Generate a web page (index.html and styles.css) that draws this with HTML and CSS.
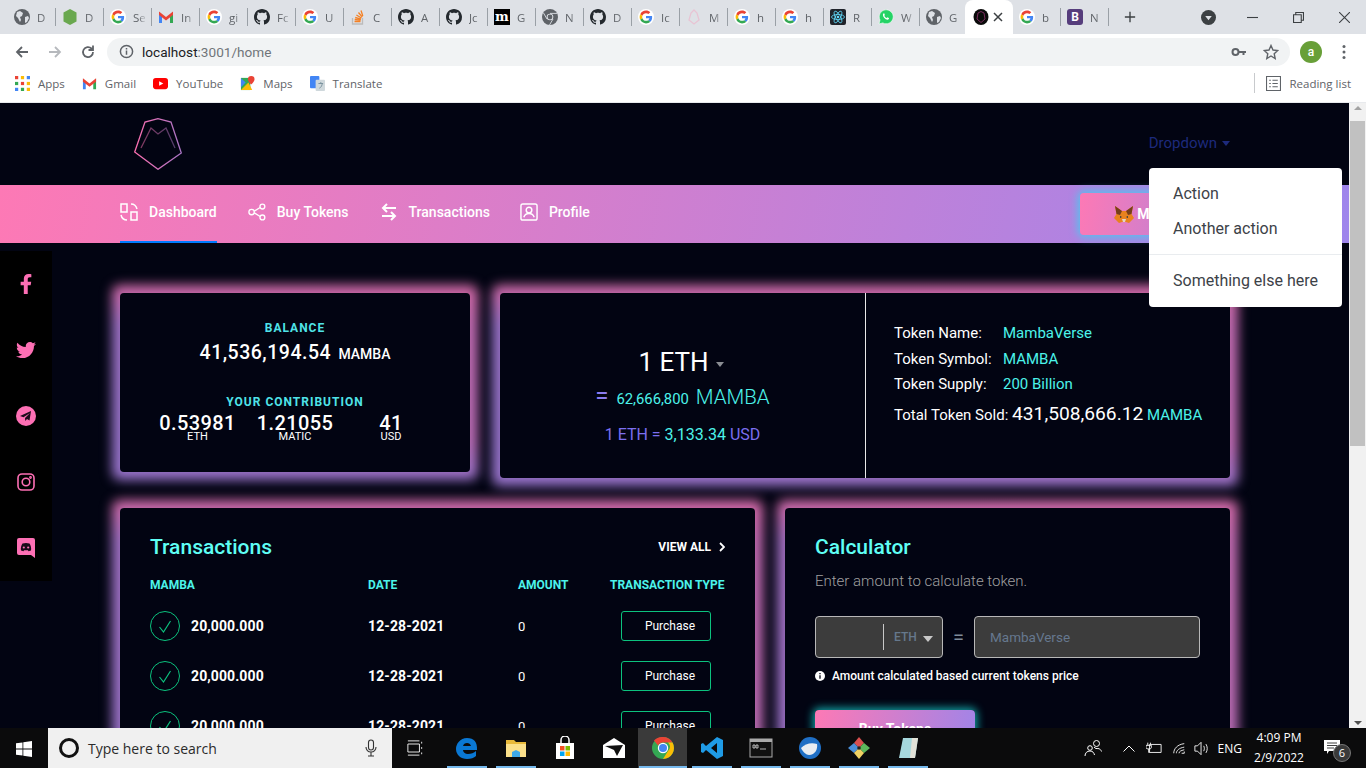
FILE: index.html
```html
<!DOCTYPE html>
<html lang="en">
<head>
  <meta charset="UTF-8">
  <meta name="viewport" content="width=device-width, initial-scale=1.0">
  <title>MambaVerse Dashboard</title>
  <link rel="stylesheet" href="styles.css">
</head>
<body>

  <svg class="defs" width="0" height="0">
    <symbol id="globe" viewBox="0 0 16 16">
      <circle cx="8" cy="8" r="8" fill="#5f6368"/>
      <path d="M3 3l3-1 3 2-1 3-2 1 1 3-1 2-2-4-2-2zM11 8l3-1 1 2-2 4-2 1z" fill="#dee1e6"/>
    </symbol>
    <symbol id="node" viewBox="0 0 16 16">
      <path d="M8 0l6.500 3.500v9L8 16l-6.500-3.500v-9z" fill="#6aa84f"/>
    </symbol>
    <symbol id="google" viewBox="-6 -6 60 60">
      <circle cx="24" cy="24" r="30" fill="#fff"/>
      <path fill="#EA4335" d="M24 9.5c3.54 0 6.71 1.22 9.21 3.6l6.85-6.85C35.9 2.38 30.47 0 24 0 14.62 0 6.51 5.38 2.56 13.22l7.98 6.19C12.43 13.72 17.74 9.5 24 9.5z"/>
      <path fill="#4285F4" d="M46.98 24.55c0-1.57-.15-3.09-.38-4.55H24v9.02h12.94c-.58 2.96-2.26 5.48-4.78 7.18l7.73 6c4.51-4.18 7.09-10.36 7.09-17.65z"/>
      <path fill="#FBBC05" d="M10.53 28.59c-.48-1.45-.76-2.99-.76-4.59s.27-3.14.76-4.59l-7.98-6.19C.92 16.46 0 20.12 0 24c0 3.88.92 7.54 2.56 10.78l7.97-6.19z"/>
      <path fill="#34A853" d="M24 48c6.48 0 11.93-2.13 15.89-5.81l-7.73-6c-2.15 1.45-4.92 2.3-8.16 2.3-6.26 0-11.57-4.22-13.47-9.91l-7.98 6.19C6.51 42.62 14.62 48 24 48z"/>
    </symbol>
    <symbol id="gmail" viewBox="0 0 16 16">
      <path d="M1 3v11h3V7z" fill="#4285f4"/>
      <path d="M15 3v11h-3V7z" fill="#34a853"/>
      <path d="M1 2.500l7 5.500 7-5.500V6L8 11.500 1 6z" fill="#ea4335"/>
    </symbol>
    <symbol id="github" viewBox="0 0 16 16">
      <path fill="#24292e" d="M8 0C3.58 0 0 3.58 0 8c0 3.54 2.29 6.53 5.47 7.59.4.07.55-.17.55-.38 0-.19-.01-.82-.01-1.49-2.01.37-2.53-.49-2.69-.94-.09-.23-.48-.94-.82-1.13-.28-.15-.68-.52-.01-.53.63-.01 1.08.58 1.23.82.72 1.21 1.87.87 2.33.66.07-.52.28-.87.51-1.07-1.78-.2-3.64-.89-3.64-3.95 0-.87.31-1.59.82-2.15-.08-.2-.36-1.02.08-2.12 0 0 .67-.21 2.2.82.64-.18 1.32-.27 2-.27.68 0 1.36.09 2 .27 1.53-1.04 2.2-.82 2.2-.82.44 1.1.16 1.92.08 2.12.51.56.82 1.27.82 2.15 0 3.07-1.87 3.75-3.65 3.95.29.25.54.73.54 1.48 0 1.07-.01 1.93-.01 2.2 0 .21.15.46.55.38A8.013 8.013 0 0016 8c0-4.42-3.58-8-8-8z"/>
    </symbol>
    <symbol id="stack" viewBox="0 0 16 16">
      <path d="M2.500 9v6h10V9" fill="none" stroke="#bcbbbb" stroke-width="1.300"/>
      <path d="M4.500 12.500h6M4.700 10.500l6 .6M5.200 8.500l5.800 1.600M6.400 6l5 3M8.500 3.500l3.800 4.600M11 1.500l1.800 5.500" fill="none" stroke="#f48024" stroke-width="1.300"/>
    </symbol>
    <symbol id="chromium" viewBox="0 0 16 16">
      <circle cx="8" cy="8" r="8" fill="#5f6368"/>
      <path d="M8 4.400h7M5 10L1.500 4M11 10l-3.500 6" stroke="#dee1e6" stroke-width=".9"/>
      <circle cx="8" cy="8" r="3.300" fill="#dee1e6"/>
      <circle cx="8" cy="8" r="2.400" fill="#5f6368"/>
    </symbol>
    <symbol id="mamba-pale" viewBox="0 0 16 16">
      <path d="M8 1l3 3 2 7-5 4-5-4 2-7z" fill="none" stroke="#e8c4d4" stroke-width="1.300"/>
    </symbol>
    <symbol id="react" viewBox="0 0 16 16">
      <rect width="16" height="16" rx="2" fill="#20232a"/>
      <g fill="none" stroke="#61dafb" stroke-width=".8">
        <ellipse cx="8" cy="8" rx="6.500" ry="2.500"/>
        <ellipse cx="8" cy="8" rx="6.500" ry="2.500" transform="rotate(60 8 8)"/>
        <ellipse cx="8" cy="8" rx="6.500" ry="2.500" transform="rotate(120 8 8)"/>
      </g>
      <circle cx="8" cy="8" r="1.300" fill="#61dafb"/>
    </symbol>
    <symbol id="whatsapp" viewBox="0 0 16 16">
      <path d="M1 15l1-4a7 7 0 112.800 2.900z" fill="#25d366" stroke="#fff" stroke-width=".6"/>
      <path d="M5.500 4.500c-1 1-.7 2.600.6 4.200s3 2.400 4.200 1.800c.8-.5.9-1.300.5-1.500l-1.400-.7-.7.8c-.9-.3-2-1.300-2.400-2.300l.6-.8-.6-1.500c-.2-.2-.5-.2-.8 0z" fill="#fff"/>
    </symbol>
    <symbol id="mamba-dark" viewBox="0 0 16 16">
      <ellipse cx="8" cy="8" rx="7.500" ry="8" fill="#0a0a0a"/>
      <path d="M8 2.500l3 1.500 1 6-4 3.500-4-3.500 1-6z" fill="none" stroke="#7a2c5e" stroke-width="1"/>
    </symbol>
    <symbol id="check" viewBox="0 0 30 30">
      <circle cx="15" cy="15" r="14.500" fill="none" stroke="#0cc27e" stroke-width="1"/>
      <path d="M9.500 16l4 5 7-11" fill="none" stroke="#0cc27e" stroke-width="1.200"/>
    </symbol>
  </svg>

  <div class="browser">
    <div class="tabstrip">
      <div class="tab"><svg class="fav"><use href="#globe"/></svg><span>D</span></div>
      <div class="tab"><svg class="fav"><use href="#node"/></svg><span>D</span></div>
      <div class="tab"><svg class="fav"><use href="#google"/></svg><span>Se</span></div>
      <div class="tab"><svg class="fav"><use href="#gmail"/></svg><span>In</span></div>
      <div class="tab"><svg class="fav"><use href="#google"/></svg><span>gi</span></div>
      <div class="tab"><svg class="fav"><use href="#github"/></svg><span>Fc</span></div>
      <div class="tab"><svg class="fav"><use href="#google"/></svg><span>U</span></div>
      <div class="tab"><svg class="fav"><use href="#stack"/></svg><span>C</span></div>
      <div class="tab"><svg class="fav"><use href="#github"/></svg><span>A</span></div>
      <div class="tab"><svg class="fav"><use href="#github"/></svg><span>Jc</span></div>
      <div class="tab"><i class="fav fav-medium">m</i><span>G</span></div>
      <div class="tab"><svg class="fav"><use href="#chromium"/></svg><span>N</span></div>
      <div class="tab"><svg class="fav"><use href="#github"/></svg><span>D</span></div>
      <div class="tab"><svg class="fav"><use href="#google"/></svg><span>Ic</span></div>
      <div class="tab"><svg class="fav"><use href="#mamba-pale"/></svg><span>M</span></div>
      <div class="tab"><svg class="fav"><use href="#google"/></svg><span>h</span></div>
      <div class="tab"><svg class="fav"><use href="#google"/></svg><span>h</span></div>
      <div class="tab"><svg class="fav"><use href="#react"/></svg><span>R</span></div>
      <div class="tab"><svg class="fav"><use href="#whatsapp"/></svg><span>W</span></div>
      <div class="tab tab-noline"><svg class="fav"><use href="#globe"/></svg><span>G</span></div>
      <div class="tab tab-active"><svg class="fav"><use href="#mamba-dark"/></svg>
        <svg class="tab-close" viewBox="0 0 10 10"><path d="M1 1l8 8M9 1l-8 8"/></svg></div>
      <div class="tab"><svg class="fav"><use href="#google"/></svg><span>b</span></div>
      <div class="tab"><i class="fav fav-bootstrap">B</i><span>N</span></div>
      <svg class="newtab" viewBox="0 0 14 14"><path d="M7 1v12M1 7h12"/></svg>
      <svg class="tabsearch" viewBox="0 0 16 16"><circle cx="8" cy="8" r="8" fill="#3c4043"/><path d="M4.500 6.500h7L8 11z" fill="#dee1e6"/></svg>
      <div class="winbtns">
        <svg viewBox="0 0 10 10"><path d="M0 5h10"/></svg>
        <svg viewBox="0 0 10 10"><path d="M.5 2.500h7v7h-7zM2.500 2.500v-2h7v7h-2"/></svg>
        <svg viewBox="0 0 10 10"><path d="M0 0l10 10M10 0L0 10"/></svg>
      </div>
    </div>

    <div class="toolbar">
      <svg class="tool" viewBox="0 0 16 16"><path d="M14 8H3M8 3L3 8l5 5" stroke="#5f6368"/></svg>
      <svg class="tool" viewBox="0 0 16 16"><path d="M2 8h11M8 3l5 5-5 5" stroke="#b6b9bd"/></svg>
      <svg class="tool" viewBox="0 0 16 16"><path d="M13 8a5 5 0 11-1.500-3.500L13 6M13 1.500V6H8.500" stroke="#5f6368"/></svg>
      <div class="omnibox">
        <svg class="omni-info" viewBox="0 0 16 16"><circle cx="8" cy="8" r="6.500"/><path d="M8 7v4.500M8 4.200v1.600"/></svg>
        <span class="url"><b>localhost</b>:3001/home</span>
        <svg class="omni-key" viewBox="0 0 16 16"><circle cx="4.500" cy="8" r="3" fill="none" stroke="#5f6368" stroke-width="2"/><path d="M7 7h8v2h-1.500v2h-2V9H7z" fill="#5f6368"/></svg>
        <svg class="omni-star" viewBox="0 0 16 16"><path d="M8 1.500l2 4.500 4.800.5-3.600 3.200 1 4.800L8 12l-4.200 2.500 1-4.800L1.200 6.500 6 6z"/></svg>
      </div>
      <span class="avatar">a</span>
      <svg class="menu-dots" viewBox="0 0 4 16"><circle cx="2" cy="2.500" r="1.500"/><circle cx="2" cy="8" r="1.500"/><circle cx="2" cy="13.500" r="1.500"/></svg>
    </div>

    <div class="bookmarks">
      <a class="bm">
        <svg class="bm-icon" viewBox="0 0 14 14">
          <rect width="3" height="3" fill="#ea4335"/><rect x="5.500" width="3" height="3" fill="#fbbc05"/><rect x="11" width="3" height="3" fill="#4285f4"/>
          <rect y="5.500" width="3" height="3" fill="#34a853"/><rect x="5.500" y="5.500" width="3" height="3" fill="#ea4335"/><rect x="11" y="5.500" width="3" height="3" fill="#fbbc05"/>
          <rect y="11" width="3" height="3" fill="#4285f4"/><rect x="5.500" y="11" width="3" height="3" fill="#34a853"/><rect x="11" y="11" width="3" height="3" fill="#fbbc05"/>
        </svg>Apps</a>
      <a class="bm"><svg class="bm-icon"><use href="#gmail"/></svg>Gmail</a>
      <a class="bm"><svg class="bm-icon" viewBox="0 0 16 16"><rect y="2" width="16" height="12" rx="3" fill="#f00"/><path d="M6.500 5.500L11 8l-4.500 2.500z" fill="#fff"/></svg>YouTube</a>
      <a class="bm"><svg class="bm-icon" viewBox="0 0 16 16"><path d="M1 2h10v13H1z" fill="#34a853"/><path d="M1 15l8-8 4 8z" fill="#fbbc05"/><path d="M1 2l5 5-5 5z" fill="#4285f4"/><path d="M12 0a3.500 3.500 0 013.500 3.500C15.500 6 12 9 12 9S8.500 6 8.500 3.500A3.500 3.500 0 0112 0z" fill="#ea4335"/></svg>Maps</a>
      <a class="bm"><svg class="bm-icon" viewBox="0 0 16 16"><rect width="10" height="13" rx="1" fill="#4285f4"/><rect x="6" y="4" width="10" height="12" rx="1" fill="#cfd8dc"/><path d="M9 8h5M11.500 6.500v1.500M10 13c2-1 3-3 3-5" fill="none" stroke="#78909c"/></svg>Translate</a>
      <a class="bm bm-reading"><svg class="bm-icon" viewBox="0 0 14 14"><path d="M.5.500h13v13H.5zM3 4h1.500M6 4h5M3 7h1.500M6 7h5M3 10h1.500M6 10h5" fill="none" stroke="#5f6368"/></svg>Reading list</a>
    </div>
  </div>

  <div class="viewport">
    <div class="page">
      <header class="topbar">
        <div class="container topbar-inner">
          <svg class="logo" viewBox="0 0 48 52">
            <defs>
              <linearGradient id="logoGrad" x1="0" y1="0" x2="1" y2="0">
                <stop offset="0" stop-color="#fd6fb0"/>
                <stop offset="1" stop-color="#a874c4"/>
              </linearGradient>
            </defs>
            <path d="M24 .7L11 4 .7 34 24 51.300 47.300 35 37 4z" fill="none" stroke="url(#logoGrad)" stroke-width="1.300"/>
            <path d="M7 30l10-20 7 6 8-6 9 20" fill="none" stroke="url(#logoGrad)" stroke-width="1.300" opacity=".5"/>
          </svg>
          <a class="dropdown-toggle">Dropdown<i class="caret"></i></a>
        </div>
      </header>

      <nav class="navbar">
        <div class="container navbar-inner">
          <a class="nav-link active">
            <svg viewBox="0 0 18 18"><path d="M1 1h6v8H1zM11 9h6v8h-6zM11 1c3 0 5 1 6 5M7 17c-3 0-5-1-6-5"/></svg>Dashboard</a>
          <a class="nav-link">
            <svg viewBox="0 0 20 20"><circle cx="4" cy="10" r="3"/><circle cx="16" cy="4" r="2.700"/><circle cx="16" cy="16" r="2.700"/><path d="M7 9l6.500-4M7 11l6.500 4"/></svg>Buy Tokens</a>
          <a class="nav-link nav-tx">
            <svg viewBox="0 0 16 18" class="thick"><path d="M15 5H2M6 1L2 5l4 4M1 13h13M10 9l4 4-4 4"/></svg>Transactions</a>
          <a class="nav-link">
            <svg viewBox="0 0 19 19"><rect x="1" y="1" width="17" height="17" rx="2"/><circle cx="9.500" cy="7.500" r="3"/><path d="M4 15c1-3 3-4 5.500-4s4.500 1 5.500 4"/></svg>Profile</a>
          <a class="wallet-btn">
            <svg class="fox" viewBox="0 0 20 19">
              <path d="M1 1l7 5h4l7-5-1.500 8L20 13l-5 5-3-1H8l-3 1-5-5 2.500-4z" fill="#e8821e"/>
              <path d="M1 1l7 5-2 4-3.500-1zM19 1l-7 5 2 4 3.500-1z" fill="#763e1a"/>
              <path d="M8 14h4l-1 3H9z" fill="#e4d5c7"/>
              <path d="M6 11l2 1-2 1zM14 11l-2 1 2 1z" fill="#233447"/>
            </svg>MetaMask</a>
        </div>
      </nav>

      <main class="container content">
        <div class="row">
          <section class="card card-balance">
            <h6 class="label">BALANCE</h6>
            <p class="balance">41,536,194.54 <small>MAMBA</small></p>
            <h6 class="label label-contrib">YOUR CONTRIBUTION</h6>
            <div class="contrib">
              <div class="contrib-item item-eth"><strong>0.53981</strong><span>ETH</span></div>
              <div class="contrib-item item-matic"><strong>1.21055</strong><span>MATIC</span></div>
              <div class="contrib-item item-usd"><strong>41</strong><span>USD</span></div>
            </div>
          </section>

          <section class="card card-rate">
            <div class="rate">
              <div class="rate-eth">1 ETH<i class="caret caret-grey"></i></div>
              <div class="rate-mamba"><span class="eq">=</span><span class="num">62,666,800</span><span class="unit">MAMBA</span></div>
              <div class="rate-usd">1 ETH = <em>3,133.34</em> USD</div>
            </div>
            <div class="token-info">
              <div class="info-row"><span class="info-key">Token Name:</span><span class="cyan">MambaVerse</span></div>
              <div class="info-row"><span class="info-key">Token Symbol:</span><span class="cyan">MAMBA</span></div>
              <div class="info-row"><span class="info-key">Token Supply:</span><span class="cyan">200 Billion</span></div>
              <div class="sold">Total Token Sold: <big>431,508,666.12</big> <span class="cyan">MAMBA</span></div>
            </div>
          </section>
        </div>

        <div class="row">
          <section class="card card-tx">
            <div class="card-head">
              <h4 class="card-title">Transactions</h4>
              <a class="view-all">VIEW ALL<svg viewBox="0 0 6 10"><path d="M1 1l4 4-4 4"/></svg></a>
            </div>
            <div class="tx-table">
              <div class="tx-row tx-header"><span>MAMBA</span><span>DATE</span><span>AMOUNT</span><span>TRANSACTION TYPE</span></div>
              <div class="tx-row">
                <span class="tx-amt"><svg class="tx-check"><use href="#check"/></svg>20,000.000</span>
                <span class="tx-date">12-28-2021</span><span class="tx-zero">0</span>
                <span class="tx-type"><a class="purchase">Purchase</a></span>
              </div>
              <div class="tx-row">
                <span class="tx-amt"><svg class="tx-check"><use href="#check"/></svg>20,000.000</span>
                <span class="tx-date">12-28-2021</span><span class="tx-zero">0</span>
                <span class="tx-type"><a class="purchase">Purchase</a></span>
              </div>
              <div class="tx-row">
                <span class="tx-amt"><svg class="tx-check"><use href="#check"/></svg>20,000.000</span>
                <span class="tx-date">12-28-2021</span><span class="tx-zero">0</span>
                <span class="tx-type"><a class="purchase">Purchase</a></span>
              </div>
            </div>
          </section>

          <section class="card card-calc">
            <h4 class="card-title">Calculator</h4>
            <p class="calc-sub">Enter amount to calculate token.</p>
            <div class="calc-form">
              <div class="field field-amount">
                <span class="field-empty"></span>
                <span class="field-cur">ETH<i class="caret caret-light"></i></span>
              </div>
              <span class="calc-eq">=</span>
              <div class="field field-out">MambaVerse</div>
            </div>
            <p class="calc-note">
              <svg viewBox="0 0 10 10"><circle cx="5" cy="5" r="5" fill="#fff"/><path d="M5 4.300v3.500M5 2v1.300" stroke="#020412" stroke-width="1.300"/></svg>
              Amount calculated based current tokens price</p>
            <a class="buy-btn">Buy Tokens</a>
          </section>
        </div>
      </main>

      <aside class="social">
        <svg viewBox="0 0 320 512"><path d="M279.14 288l14.22-92.66h-88.91v-60.13c0-25.35 12.42-50.06 52.24-50.06h40.42V6.26S260.43 0 225.36 0c-73.22 0-121.08 44.38-121.08 124.72v70.62H22.89V288h81.39v224h100.17V288z"/></svg>
        <svg viewBox="0 0 512 512"><path d="M459.37 151.716c.325 4.548.325 9.097.325 13.645 0 138.72-105.583 298.558-298.558 298.558-59.452 0-114.68-17.219-161.137-47.106 8.447.974 16.568 1.299 25.34 1.299 49.055 0 94.213-16.568 130.274-44.832-46.132-.975-84.792-31.188-98.112-72.772 6.498.974 12.995 1.624 19.818 1.624 9.421 0 18.843-1.3 27.614-3.573-48.081-9.747-84.143-51.98-84.143-102.985v-1.299c13.969 7.797 30.214 12.67 47.431 13.319-28.264-18.843-46.781-51.005-46.781-87.391 0-19.492 5.197-37.36 14.294-52.954 51.655 63.675 129.3 105.258 216.365 109.807-1.624-7.797-2.599-15.918-2.599-24.04 0-57.828 46.782-104.934 104.934-104.934 30.213 0 57.502 12.67 76.67 33.137 23.715-4.548 46.456-13.32 66.599-25.34-7.798 24.366-24.366 44.833-46.132 57.827 21.117-2.273 41.584-8.122 60.426-16.243-14.292 20.791-32.161 39.308-52.628 54.253z"/></svg>
        <svg viewBox="0 0 20 20"><circle cx="10" cy="10" r="10"/><path d="M15 5L4 10l3.500 1.300L14 7l-5 5 .3 3 1.700-2 2.500 1.500z" fill="#1a0b1a"/></svg>
        <svg viewBox="0 0 18 18" class="social-ig"><rect x="1" y="1" width="16" height="16" rx="4"/><circle cx="9" cy="9" r="3.800"/><circle cx="13.500" cy="4.500" r=".6"/></svg>
        <svg viewBox="0 0 18 20"><path d="M2 0h14a2 2 0 012 2v18l-4-3H2a2 2 0 01-2-2V2a2 2 0 012-2z"/><path d="M4 12.500c-.5-2.500.2-5 1.500-7 2.300-.8 4.700-.8 7 0 1.300 2 2 4.500 1.500 7l-2.500.8-.6-1H7.100l-.6 1z" fill="#1a0b1a"/><circle cx="6.800" cy="9.500" r="1.100"/><circle cx="11.200" cy="9.500" r="1.100"/></svg>
      </aside>

      <div class="dropdown-menu">
        <a class="dropdown-item">Action</a>
        <a class="dropdown-item">Another action</a>
        <hr class="dropdown-divider">
        <a class="dropdown-item">Something else here</a>
      </div>
    </div>

    <div class="scrollbar">
      <i class="arrow arrow-up"></i>
      <div class="thumb"></div>
      <i class="arrow arrow-down"></i>
    </div>
  </div>

  <footer class="taskbar">
    <svg class="win-logo" viewBox="0 0 16 16"><path d="M0 2.300l6.500-.9v6.200H0zM7.300 1.300L16 0v7.600H7.300zM0 8.400h6.500v6.200L0 13.700zM7.300 8.400H16V16l-8.700-1.200z" fill="#fff"/></svg>
    <div class="searchbox">
      <span class="search-ring"></span>
      <span class="search-text">Type here to search</span>
      <svg class="search-mic" viewBox="0 0 12 18"><rect x="3.500" y="1" width="5" height="10" rx="2.500"/><path d="M1 8c0 3 2 5 5 5s5-2 5-5M6 13v4M3 17h6"/></svg>
    </div>
    <div class="apps">
      <div class="app app-view"><svg viewBox="0 0 18 18" fill="none" stroke="#fff"><path d="M1 1h13M1 4.500h13v9H1zM1 17h13M16.500 2v2M16.500 8v2M16.500 14v2"/></svg></div>
      <div class="app open"><svg viewBox="0 0 24 24"><path d="M12 2C5 2 1 8 1 13c0 6 5 10 11 10 4 0 7-1 9-3v-5c-2 2-5 3-8 3-3 0-5-2-5-4h14c.5-8-3-12-10-12zM8 10c.5-2 2-3 4-3s3.500 1 4 3z" fill="#0a78d4" fill-rule="evenodd"/></svg></div>
      <div class="app open"><svg viewBox="0 0 24 24"><path d="M2 4h8l2 2h10v4H2z" fill="#e8b93a"/><path d="M2 8h20v13H2z" fill="#fbe08a"/><path d="M8 21v-5l4-2 4 2v5z" fill="#3fa9e8"/></svg></div>
      <div class="app"><svg viewBox="0 0 24 24"><path d="M3 7h18v16H3z" fill="#fff"/><path d="M8 7V4a4 4 0 018 0v3" fill="none" stroke="#fff" stroke-width="1.500"/><path d="M7 10h4.500v4.500H7z" fill="#f25022"/><path d="M12.500 10H17v4.500h-4.500z" fill="#7fba00"/><path d="M7 15.500h4.500V20H7z" fill="#00a4ef"/><path d="M12.500 15.500H17V20h-4.500z" fill="#ffb900"/></svg></div>
      <div class="app"><svg viewBox="0 0 24 24"><path d="M1 9l11-7 11 7v13H1z" fill="#fff"/><path d="M3 10l18-1-6 11-3-6z" fill="#111"/></svg></div>
      <div class="app active"><svg viewBox="0 0 24 24"><circle cx="12" cy="12" r="11" fill="#34a853"/><path d="M12 1a11 11 0 019.500 5.500H12a5.500 5.500 0 00-5 3L3 4.500A11 11 0 0112 1z" fill="#ea4335"/><path d="M21.500 6.500A11 11 0 0112 23l5-8a5.500 5.500 0 000-8.500z" fill="#fbbc05"/><circle cx="12" cy="12" r="5.200" fill="#fff"/><circle cx="12" cy="12" r="4" fill="#4285f4"/></svg></div>
      <div class="app open"><svg viewBox="0 0 24 24"><path d="M17 1l6 3v16l-6 3L6 14l-3 3-2-1V8l2-1 3 3zM17 7l-6 5 6 5z" fill="#1f9be6" fill-rule="evenodd"/></svg></div>
      <div class="app open"><svg viewBox="0 0 24 24"><rect x="1" y="3" width="22" height="18" fill="#111" stroke="#aaa"/><rect x="1" y="3" width="22" height="3" fill="#aaa"/><path d="M4 9h2v3H4zM7 9h2v3H7zM11 13h6" stroke="#ddd" fill="none" stroke-width=".8"/></svg></div>
      <div class="app open"><svg viewBox="0 0 24 24"><circle cx="12" cy="12" r="11" fill="#1f6fc5"/><path d="M3 12c4-4 10-6 16-4 1 5-2 11-8 11-3 0-6-3-8-7z" fill="#e9edf2"/></svg></div>
      <div class="app open"><svg viewBox="0 0 24 24"><path d="M12 12L7 7l5-6 5 6z" fill="#d94f4f"/><path d="M12 12L7 7 1 12l6 5z" fill="#4a8fd9"/><path d="M12 12l5-5 6 5-6 5z" fill="#5cb85c"/><path d="M12 12l-5 5 5 6 5-6z" fill="#f0d264"/><circle cx="12" cy="12" r="1.800" fill="#222"/></svg></div>
      <div class="app open"><svg viewBox="0 0 24 24"><path d="M7 2h15l-3 20H3z" fill="#a6d8de"/><path d="M16 2h6l-3 20h-5z" fill="#e2e2d8"/></svg></div>
    </div>
    <div class="tray">
      <svg class="tray-people" viewBox="0 0 18 18"><circle cx="12.500" cy="4.500" r="3"/><circle cx="6" cy="9" r="2.300"/><path d="M1 17c0-3 2-5 5-5s4 2 4.500 4M10 8c1 1.500 3 1.800 4 1.500 2 .3 3 1.500 3.500 3"/></svg>
      <svg class="tray-chev" viewBox="0 0 12 7"><path d="M.5 6.500L6 1l5.500 5.500"/></svg>
      <svg class="tray-batt" viewBox="0 0 18 14"><path d="M4 3h13v9H4zM2 1v3M5 1v2M0 4h6v2.500C6 8 4 8 3 8S0 8 0 6.500zM3 8v4h1"/></svg>
      <svg class="tray-wifi" viewBox="0 0 16 14"><path d="M2 13C2 8 6 3 14 2M5 13c0-3 3-6 9-7M8 13c0-2 2-3 6-4"/><path d="M11 13h3v-2"/></svg>
      <svg class="tray-vol" viewBox="0 0 17 16"><path d="M1 5h3l4-4v14l-4-4H1zM11 5c1 2 1 4 0 6M13.500 3c2 3 2 7 0 10"/></svg>
      <span class="tray-lang">ENG</span>
      <div class="clock"><span>4:09 PM</span><span>2/9/2022</span></div>
      <div class="notif">
        <svg viewBox="0 0 16 15"><path d="M0 0h16v11H5l-2 3v-3H0z" fill="#fff"/><path d="M3 3h10M3 5.500h10M3 8h7" stroke="#111" stroke-width=".8"/></svg>
        <span class="notif-badge">6</span>
      </div>
    </div>
  </footer>

</body>
</html>
```
FILE: styles.css
```css
* {
  box-sizing: border-box;
}

body {
  margin: 0;
  height: 768px;
  overflow: hidden;
  display: flex;
  flex-direction: column;
  font-family: Roboto, "Liberation Sans", sans-serif;
  background: #020412;
}

.defs {
  position: absolute;
}

a {
  text-decoration: none;
}

/* browser chrome */
.browser {
  height: 103px;
  flex: none;
  font-family: "Open Sans", "Liberation Sans", sans-serif;
  background: #fff;
}

.tabstrip {
  height: 34px;
  background: #dee1e6;
  display: flex;
  align-items: center;
  padding-left: 8px;
}

.tab {
  width: 48px;
  height: 18px;
  flex: none;
  display: flex;
  align-items: center;
  gap: 7px;
  padding-left: 6px;
  border-right: 1px solid #9aa0a6;
  font-size: 11.5px;
  color: #5f6368;
  overflow: hidden;
  white-space: nowrap;
}

.tab > span {
  width: 12px;
  flex: none;
  overflow: hidden;
  -webkit-mask-image: linear-gradient(90deg, #000 45%, rgba(0, 0, 0, .25));
  mask-image: linear-gradient(90deg, #000 45%, rgba(0, 0, 0, .25));
}

.tab-noline {
  border-right: 0;
  margin-right: -3px;
}

.tab-active {
  height: 34px;
  background: #fff;
  border-right: 0;
  border-radius: 8px 8px 0 0;
  padding-left: 8px;
  gap: 4px;
}

.fav {
  width: 16px;
  height: 16px;
  flex: none;
  font-style: normal;
}

.fav-medium {
  background: #000;
  color: #fff;
  font: bold 13px/15px "DejaVu Serif", serif;
  text-align: center;
}

.fav-bootstrap {
  background: #563d7c;
  color: #fff;
  border-radius: 3px;
  font: bold 12px/16px Roboto, sans-serif;
  text-align: center;
}

.tab-close {
  width: 10px;
  height: 10px;
  stroke: #3c4043;
  stroke-width: 1.5;
  fill: none;
}

.newtab {
  width: 12px;
  height: 12px;
  margin-left: 15px;
  stroke: #3c4043;
  stroke-width: 1.6;
  fill: none;
}

.tabsearch {
  width: 15px;
  height: 15px;
  margin-left: 65px;
}

.winbtns {
  display: flex;
  margin-left: 31px;
  gap: 35px;
}

.winbtns svg {
  width: 11px;
  height: 11px;
  stroke: #3c4043;
  stroke-width: 1;
  fill: none;
}

.toolbar {
  height: 35px;
  display: flex;
  align-items: center;
  padding-left: 14px;
}

.tool {
  width: 16px;
  height: 16px;
  margin-right: 17px;
  fill: none;
  stroke-width: 1.8;
}

.omnibox {
  width: 1183px;
  height: 28px;
  margin-left: -6px;
  background: #f1f3f4;
  border-radius: 14px;
  display: flex;
  align-items: center;
  padding-left: 12px;
}

.omni-info {
  width: 15px;
  height: 15px;
  fill: none;
  stroke: #5f6368;
  stroke-width: 1.6;
}

.url {
  margin-left: 8px;
  font-family: Roboto, sans-serif;
  font-size: 13.6px;
  color: #70757a;
}

.url b {
  font-weight: 400;
  color: #202124;
}

.omni-key {
  width: 16px;
  height: 16px;
  margin-left: auto;
}

.omni-star {
  width: 16px;
  height: 16px;
  margin: 0 11px 0 16px;
  fill: none;
  stroke: #5f6368;
  stroke-width: 1.4;
}

.avatar {
  width: 22px;
  height: 22px;
  margin-left: 10px;
  border-radius: 50%;
  background: #689f38;
  color: #fff;
  font: 500 12px/22px Roboto, sans-serif;
  text-align: center;
}

.menu-dots {
  width: 4px;
  height: 16px;
  margin-left: 20px;
  fill: #5f6368;
}

.bookmarks {
  height: 34px;
  display: flex;
  align-items: center;
  padding: 0 0 5px 15px;
  border-bottom: 1px solid #e8eaed;
}

.bm {
  display: flex;
  align-items: center;
  gap: 8px;
  margin-right: 17px;
  font-size: 11.5px;
  color: #5f6368;
}

.bm-icon {
  width: 15px;
  height: 15px;
  flex: none;
}

.bm-reading {
  margin: 0 15px 0 auto;
  padding-left: 11px;
  height: 20px;
  border-left: 1px solid #c8cacd;
}

/* page */
.viewport {
  height: 625px;
  flex: none;
  display: flex;
  overflow: hidden;
}

.page {
  flex: 1;
  position: relative;
  overflow: hidden;
  color: #fff;
}

.container {
  width: 1110px;
  margin-left: 120px;
}

.topbar {
  height: 82px;
}

.topbar-inner {
  height: 100%;
  display: flex;
  justify-content: space-between;
  padding-top: 15px;
}

.logo {
  width: 48px;
  height: 52px;
  margin-left: 14px;
}

.dropdown-toggle {
  margin-top: 16px;
  font-size: 15px;
  line-height: 18px;
  color: #1d2a7c;
}

.caret {
  display: inline-block;
  margin-left: 5px;
  vertical-align: 2px;
  border-top: 5px solid currentColor;
  border-left: 4px solid transparent;
  border-right: 4px solid transparent;
}

.navbar {
  height: 58px;
  background: linear-gradient(100deg, #fd79b5, #9e85ec);
}

.navbar-inner {
  height: 100%;
  display: flex;
  align-items: stretch;
}

.nav-link {
  display: flex;
  align-items: center;
  gap: 11px;
  margin-right: 31px;
  padding-bottom: 2px;
  font-size: 14px;
  font-weight: 500;
  color: #fff;
  border-bottom: 2px solid transparent;
}

.nav-tx {
  margin-right: 30px;
}

.nav-link.active {
  border-bottom-color: #007bff;
}

.nav-link svg {
  width: 18px;
  height: 18px;
  fill: none;
  stroke: #fff;
  stroke-width: 1.5;
}

.nav-link svg.thick {
  stroke-width: 2;
}

.wallet-btn {
  width: 150px;
  height: 42px;
  margin: 8px 0 0 auto;
  padding-left: 8px;
  display: flex;
  align-items: center;
  justify-content: center;
  gap: 3px;
  border-radius: 4px;
  background: linear-gradient(100deg, #fd79b5, #a984e0);
  box-shadow: 0 0 8px 2px #4fc6ee;
  font-size: 14px;
  font-weight: 700;
  color: #fff;
}

.fox {
  width: 20px;
  height: 19px;
}

.content {
  padding-top: 50px;
}

.row {
  position: relative;
  z-index: 0;
  display: flex;
  align-items: flex-start;
  gap: 30px;
  margin-bottom: 30px;
}

/* glow round the cards */
.card {
  position: relative;
  background: #020412;
  border-radius: 4px;
}

.card::before {
  content: "";
  position: absolute;
  inset: -8px;
  z-index: -1;
  border-radius: 8px;
  background:
    linear-gradient(180deg, #d56aa8 0, rgba(213, 106, 168, 0) 40px),
    linear-gradient(0deg, #9a74cc 0, rgba(154, 116, 204, 0) 40px),
    linear-gradient(240deg, #c46ab0, #9272c8);
  filter: blur(6px);
}

.card-balance {
  width: 350px;
  height: 179px;
  padding-top: 28px;
}

.label {
  margin: 0;
  text-align: center;
  font-size: 12px;
  line-height: 14px;
  font-weight: 700;
  letter-spacing: 1px;
  color: #4fe3e8;
}

.balance {
  margin: 6px 0 0;
  text-align: center;
  font-size: 19.5px;
  line-height: 24px;
  font-weight: 500;
  letter-spacing: .5px;
}

.balance small {
  margin-left: 2px;
  font-size: 14px;
  letter-spacing: 0;
}

.label-contrib {
  margin-top: 29px;
}

.contrib {
  display: flex;
  margin: 6px 0 0 40px;
}

.contrib-item {
  display: flex;
  flex-direction: column;
  align-items: center;
}

.contrib-item strong {
  font-size: 20px;
  line-height: 16px;
  font-weight: 500;
  letter-spacing: .4px;
}

.contrib-item span {
  font-size: 11px;
  line-height: 11px;
}

.item-eth {
  width: 75px;
}

.item-matic {
  width: 76px;
  margin-left: 22px;
}

.item-usd {
  width: 22px;
  margin-left: 47px;
}

.card-rate {
  width: 730px;
  height: 185px;
  display: flex;
}

.rate {
  width: 366px;
  border-right: 1px solid #e8e8e8;
  padding-top: 52px;
  text-align: center;
}

.rate-eth {
  padding-right: 3px;
  font-size: 26px;
  line-height: 34px;
}

.caret-grey {
  color: #8a8d93;
  margin-left: 7px;
  vertical-align: 4px;
}

.rate-mamba {
  display: flex;
  align-items: baseline;
  justify-content: center;
  margin-top: 3px;
  height: 31px;
  color: #4cf3ea;
}

.eq {
  font-size: 24px;
  color: #8b7cf0;
  margin-right: 8px;
}

.num {
  font-size: 14.8px;
  margin-right: 7px;
}

.unit {
  font-size: 20.5px;
  font-weight: 300;
}

.rate-usd {
  margin-top: 12px;
  font-size: 16px;
  line-height: 20px;
  color: #7c6ff0;
}

.rate-usd em {
  font-style: normal;
  color: #4cf3ea;
}

.token-info {
  flex: 1;
  padding: 27px 0 0 28px;
  font-size: 15px;
}

.info-row {
  display: flex;
  height: 25.5px;
  line-height: 26px;
}

.info-key {
  width: 109px;
}

.cyan {
  color: #4cf3ea;
}

.sold {
  margin-top: 3px;
  line-height: 28px;
}

.sold big {
  font-size: 19.2px;
}

.card-tx {
  width: 635px;
  height: 400px;
  padding: 24px 30px 0;
}

.card-head {
  display: flex;
  justify-content: space-between;
  align-items: center;
}

.card-title {
  margin: 0;
  font-size: 21px;
  line-height: 30px;
  font-weight: 500;
  color: #5ffff5;
}

.view-all {
  display: flex;
  align-items: center;
  gap: 8px;
  font-size: 12px;
  font-weight: 700;
  color: #fff;
}

.view-all svg {
  width: 6px;
  height: 10px;
  fill: none;
  stroke: #fff;
  stroke-width: 1.8;
}

.tx-table {
  margin-top: 13px;
}

.tx-row {
  display: grid;
  grid-template-columns: 218px 150px 92px 115px;
  align-items: center;
  height: 50px;
}

.tx-row.tx-header {
  height: 20px;
  margin-bottom: 6px;
  font-size: 12px;
  font-weight: 700;
  color: #4cf3ea;
  white-space: nowrap;
}

.tx-amt {
  display: flex;
  align-items: center;
  gap: 11px;
  font-size: 14px;
  letter-spacing: .1px;
  font-weight: 700;
}

.tx-check {
  width: 30px;
  height: 30px;
}

.tx-date {
  font-size: 14px;
  letter-spacing: .1px;
  font-weight: 700;
}

.tx-zero {
  font-size: 13px;
}

.tx-type {
  text-align: right;
  padding-right: 14px;
}

.purchase {
  display: inline-block;
  width: 90px;
  height: 30px;
  padding-left: 8px;
  border: 1px solid #0cc27e;
  border-radius: 3px;
  font-size: 12px;
  line-height: 28px;
  text-align: center;
  color: #fff;
}

.card-calc {
  width: 445px;
  height: 400px;
  padding: 24px 30px 0;
}

.calc-sub {
  margin: 9px 0 0;
  font-size: 15px;
  line-height: 20px;
  font-weight: 300;
  color: #a0a0a0;
}

.calc-form {
  display: flex;
  align-items: center;
  margin-top: 25px;
}

.field {
  height: 42px;
  background: #3c3c3c;
  border: 1px solid #b8b8b8;
  border-radius: 4px;
  display: flex;
  align-items: center;
}

.field-amount {
  width: 128px;
}

.field-empty {
  width: 68px;
  height: 26px;
  border-right: 1px solid #c8c8c8;
}

.field-cur {
  margin-left: 10px;
  font-size: 12px;
  font-weight: 500;
  color: #66788c;
}

.caret-light {
  color: #c8c8c8;
  margin-left: 6px;
  vertical-align: -1px;
  border-top-width: 6px;
  border-left-width: 5px;
  border-right-width: 5px;
}

.calc-eq {
  width: 31px;
  text-align: center;
  font-size: 20px;
  color: #7f8c9a;
}

.field-out {
  width: 226px;
  padding-left: 15px;
  font-size: 13.5px;
  color: #66788f;
}

.calc-note {
  display: flex;
  align-items: center;
  gap: 7px;
  margin: 10px 0 0;
  font-size: 12px;
  line-height: 16px;
  font-weight: 500;
}

.calc-note svg {
  width: 10px;
  height: 10px;
}

.buy-btn {
  display: block;
  width: 160px;
  height: 44px;
  margin-top: 26px;
  border-radius: 4px;
  background: linear-gradient(100deg, #fd79b5, #a084e8);
  box-shadow: 0 0 8px 2px #12a5a8;
  text-align: center;
  font-size: 14px;
  font-weight: 700;
  line-height: 38px;
  color: #fff;
}

/* things lying over the page */
.social {
  position: absolute;
  top: 148px;
  left: 0;
  width: 52px;
  height: 330px;
  background: #000;
  display: flex;
  flex-direction: column;
  align-items: center;
  z-index: 2;
}

.social svg {
  width: 20px;
  height: 20px;
  margin: 23px 0;
  fill: #fd6fb4;
}

.social svg.social-ig {
  width: 18px;
  height: 18px;
  margin: 24px 0;
  fill: none;
  stroke: #fd6fb4;
  stroke-width: 1.6;
}

.dropdown-menu {
  position: absolute;
  top: 65px;
  left: 1149px;
  width: 193px;
  height: 139px;
  padding: 8px 0;
  background: #fff;
  border-radius: 4px;
  z-index: 3;
}

.dropdown-item {
  display: block;
  padding: 5.5px 24px;
  font-size: 16px;
  line-height: 24px;
  color: #3d4248;
}

.dropdown-divider {
  height: 0;
  margin: 8px 0;
  border: 0;
  border-top: 1px solid #e9ecef;
}

.scrollbar {
  width: 17px;
  flex: none;
  background: #f1f1f1;
  display: flex;
  flex-direction: column;
  align-items: center;
}

.thumb {
  width: 15px;
  height: 325px;
  margin-top: 11px;
  background: #c1c1c1;
}

.arrow {
  width: 0;
  height: 0;
  border-left: 4px solid transparent;
  border-right: 4px solid transparent;
}

.arrow-up {
  margin-top: 3px;
  border-bottom: 4px solid #a3a3a3;
}

.arrow-down {
  margin-top: auto;
  margin-bottom: 3px;
  border-top: 4px solid #505050;
}

/* windows taskbar */
.taskbar {
  height: 40px;
  flex: none;
  display: flex;
  align-items: stretch;
  background: #0b0b0c;
  color: #fff;
  font-family: "Open Sans", "Liberation Sans", sans-serif;
}

.win-logo {
  width: 16px;
  height: 16px;
  margin: 13px 16px 0 16px;
}

.searchbox {
  width: 344px;
  display: flex;
  align-items: center;
  background: #f0f0f0;
  color: #2b2b2b;
  padding-left: 11px;
}

.search-ring {
  width: 20px;
  height: 20px;
  border: 3px solid #111;
  border-radius: 50%;
}

.search-text {
  margin-left: 9px;
  font-size: 14px;
}

.search-mic {
  width: 12px;
  height: 18px;
  margin-left: auto;
  margin-right: 15px;
  fill: none;
  stroke: #333;
  stroke-width: 1.1;
}

.apps {
  display: flex;
  margin-left: 1px;
}

.app {
  width: 49px;
  display: flex;
  align-items: center;
  justify-content: center;
}

.app.open {
  background: linear-gradient(#76b9ed, #76b9ed) center bottom / 40px 2px no-repeat;
}

.app.active {
  background: linear-gradient(#76b9ed, #76b9ed) center bottom / 48px 2px no-repeat, #3a3a3a;
}

.app svg {
  width: 24px;
  height: 24px;
}

.app-view svg {
  width: 16px;
  height: 16px;
  margin-right: 5px;
}

.tray {
  margin-left: auto;
  display: flex;
  align-items: center;
}

.tray svg {
  fill: none;
  stroke: #fff;
  stroke-width: 1;
}

.tray-people {
  width: 18px;
  height: 18px;
  margin-right: 21px;
}

.tray-chev {
  width: 12px;
  height: 7px;
  margin-right: 11px;
}

.tray-batt {
  width: 16px;
  height: 14px;
  margin-right: 10px;
}

.tray-wifi {
  width: 14px;
  height: 14px;
  margin-right: 8px;
}

.tray-vol {
  width: 15px;
  height: 15px;
  margin-right: 9px;
}

.tray-lang {
  font-size: 12px;
  margin-right: 6px;
}

.clock {
  width: 62px;
  display: flex;
  flex-direction: column;
  align-items: center;
  gap: 4px;
  font-size: 12px;
  line-height: 16px;
}

.notif {
  position: relative;
  width: 40px;
  height: 40px;
  margin: 0 15px 0 1px;
}

.tray .notif svg {
  position: absolute;
  top: 12px;
  left: 13px;
  width: 16px;
  height: 15px;
  stroke: none;
}

.notif-badge {
  position: absolute;
  top: 16px;
  left: 22px;
  width: 18px;
  height: 18px;
  border-radius: 50%;
  background: #3a3a3a;
  border: 1px solid #777;
  font-size: 11px;
  line-height: 16px;
  text-align: center;
}
```
